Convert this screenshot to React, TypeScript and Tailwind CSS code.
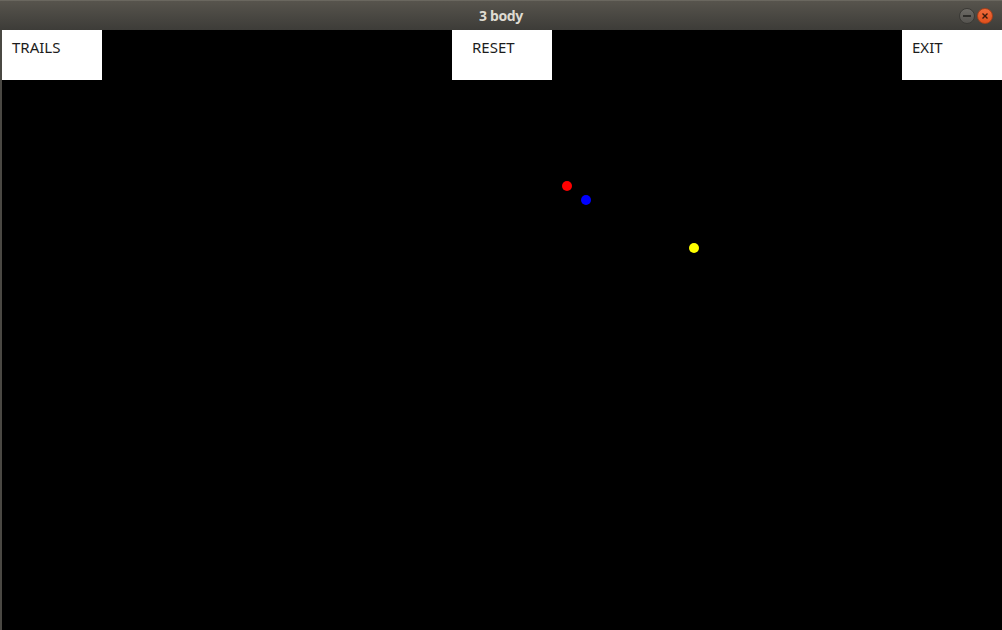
const bodies = [
  { x: 567, y: 186, color: "bg-[#ff0000]" },
  { x: 586, y: 200, color: "bg-[#0000ff]" },
  { x: 694, y: 248, color: "bg-[#ffff00]" },
];

function SimButton({ label, pad }: { label: string; pad: string }) {
  return (
    <div
      className={`w-[100px] h-[50px] bg-white text-[15px] leading-[18px] text-[#1c1c1c] pt-[8px] ${pad} cursor-default`}
      style={{ fontFamily: '"Noto Sans", "DejaVu Sans", sans-serif' }}
    >
      {label}
    </div>
  );
}

export default function App() {
  return (
    <div
      className="w-[1002px] h-[630px] flex flex-col bg-black overflow-hidden"
      style={{ fontFamily: '"Noto Sans", sans-serif' }}
    >
      {/* title bar */}
      <div className="relative h-[30px] flex items-center justify-center bg-gradient-to-b from-[#57544d] to-[#3d3c38] border-t border-[#6a675f]">
        <span className="text-[14px] font-bold text-[#dfdbd2] tracking-tight">3 body</span>
        <div className="absolute right-[9px] top-[7px] flex gap-[2px]">
          <div className="w-[16px] h-[16px] rounded-full bg-gradient-to-b from-[#6d6b66] to-[#55534f] border border-[#3a3935] flex items-center justify-center">
            <div className="w-[8px] h-[1.5px] bg-[#2e2d2a]" />
          </div>
          <div className="w-[16px] h-[16px] rounded-full bg-gradient-to-b from-[#f26b3a] to-[#e0501c] border border-[#a8401a] flex items-center justify-center">
            <svg width="8" height="8" viewBox="0 0 8 8">
              <path d="M1.5 1.5 L6.5 6.5 M6.5 1.5 L1.5 6.5" stroke="#3a1a0c" strokeWidth="1.4" />
            </svg>
          </div>
        </div>
      </div>

      {/* canvas */}
      <div className="relative flex-1 flex border-l-2 border-[#4a4843]">
        <div className="flex-1 flex items-start justify-between">
          <SimButton label="TRAILS" pad="pl-[10px]" />
          <SimButton label="RESET" pad="pl-[20px]" />
          <SimButton label="EXIT" pad="pl-[10px]" />
        </div>
        {bodies.map((b, i) => (
          <div
            key={i}
            className={`absolute w-[10px] h-[10px] rounded-full ${b.color}`}
            style={{ left: b.x - 2 - 5, top: b.y - 30 - 5 }}
          />
        ))}
      </div>
    </div>
  );
}
